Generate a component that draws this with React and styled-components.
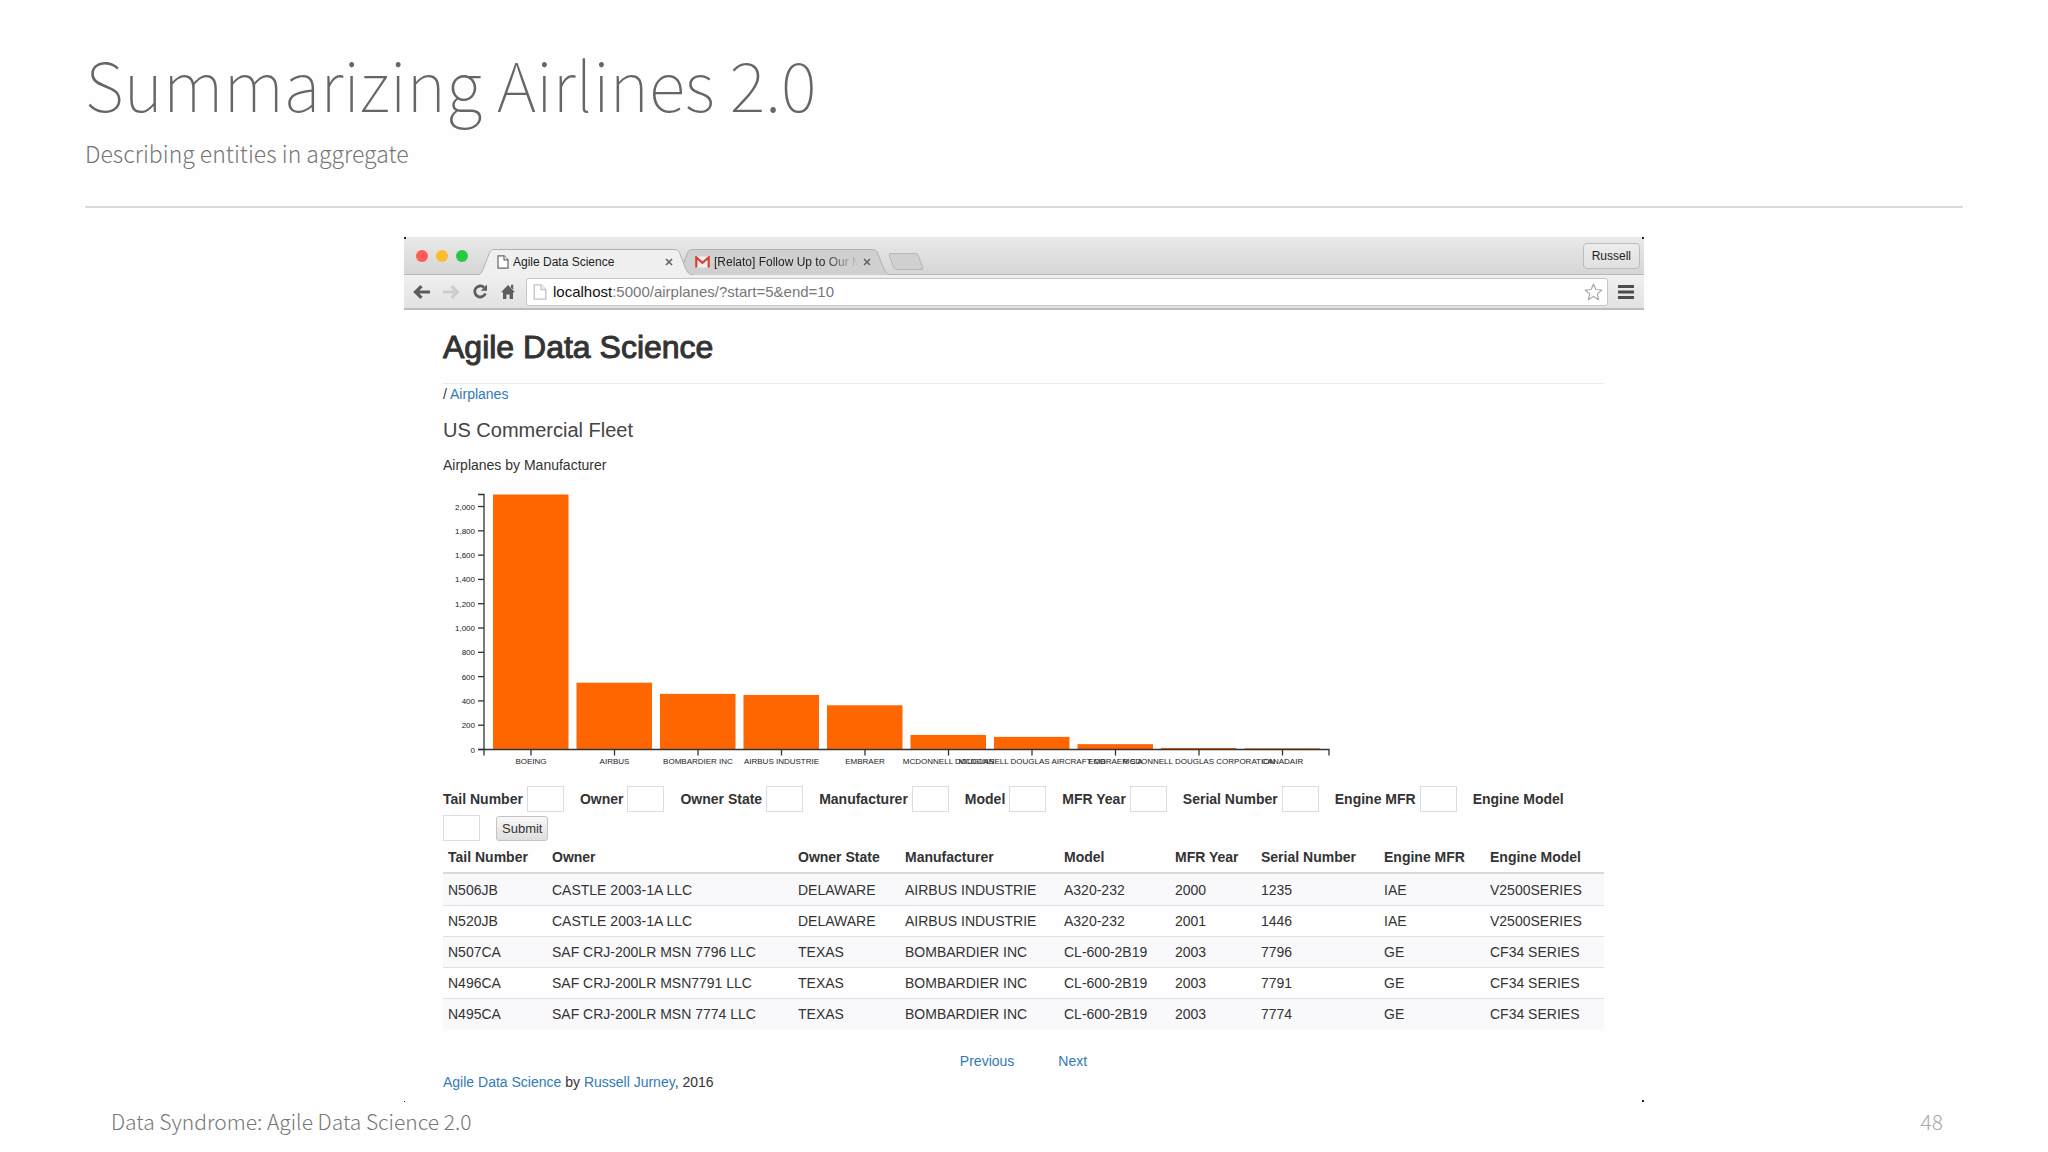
import React from 'react'
import styled, { createGlobalStyle, css } from 'styled-components'

const manufacturers = [
  { name: 'BOEING', count: 2099 },
  { name: 'AIRBUS', count: 550 },
  { name: 'BOMBARDIER INC', count: 458 },
  { name: 'AIRBUS INDUSTRIE', count: 449 },
  { name: 'EMBRAER', count: 364 },
  { name: 'MCDONNELL DOUGLAS', count: 120 },
  { name: 'MCDONNELL DOUGLAS AIRCRAFT CO', count: 104 },
  { name: 'EMBRAER S A', count: 44 },
  { name: 'MCDONNELL DOUGLAS CORPORATION', count: 13 },
  { name: 'CANADAIR', count: 10 }
]

const columns = [
  { label: 'Tail Number', width: 104 },
  { label: 'Owner', width: 246 },
  { label: 'Owner State', width: 107 },
  { label: 'Manufacturer', width: 159 },
  { label: 'Model', width: 111 },
  { label: 'MFR Year', width: 86 },
  { label: 'Serial Number', width: 123 },
  { label: 'Engine MFR', width: 106 },
  { label: 'Engine Model', width: 119 }
]

const airplanes = [
  ['N506JB', 'CASTLE 2003-1A LLC', 'DELAWARE', 'AIRBUS INDUSTRIE', 'A320-232', '2000', '1235', 'IAE', 'V2500SERIES'],
  ['N520JB', 'CASTLE 2003-1A LLC', 'DELAWARE', 'AIRBUS INDUSTRIE', 'A320-232', '2001', '1446', 'IAE', 'V2500SERIES'],
  ['N507CA', 'SAF CRJ-200LR MSN 7796 LLC', 'TEXAS', 'BOMBARDIER INC', 'CL-600-2B19', '2003', '7796', 'GE', 'CF34 SERIES'],
  ['N496CA', 'SAF CRJ-200LR MSN7791 LLC', 'TEXAS', 'BOMBARDIER INC', 'CL-600-2B19', '2003', '7791', 'GE', 'CF34 SERIES'],
  ['N495CA', 'SAF CRJ-200LR MSN 7774 LLC', 'TEXAS', 'BOMBARDIER INC', 'CL-600-2B19', '2003', '7774', 'GE', 'CF34 SERIES']
]

const PageIcon = ({ color, size }) => (
  <svg width={size - 2} height={size} viewBox="0 0 12 14" fill="#fff" stroke={color} strokeWidth="1.2">
    <path d="M1 .8h6l4 4v8.4H1z" />
    <path d="M7 .8v4h4" />
  </svg>
)

const GmailIcon = () => (
  <svg width="15" height="12" viewBox="0 0 15 12">
    <path d="M1 .5h13v11H1z" fill="#f4eeee" />
    <path d="M1.3 11.6V1.4l6.2 5.4 6.2-5.4v10.2" fill="none" stroke="#d9402f" strokeWidth="2.2" />
  </svg>
)

const CrossIcon = () => (
  <svg width="8" height="8" viewBox="0 0 8 8" stroke="#666" strokeWidth="1.7">
    <path d="M1 1l6 6M7 1L1 7" />
  </svg>
)

const ArrowIcon = ({ color, flip }) => (
  <svg width="17" height="14" viewBox="0 0 17 14" fill="none" stroke={color} strokeWidth="3.2">
    <path d={flip ? 'M0 7h14M8.5 1.2L14.5 7l-6 5.8' : 'M17 7H3M8.5 1.2L2.5 7l6 5.8'} />
  </svg>
)

const ReloadIcon = () => (
  <svg width="15" height="15" viewBox="0 0 15 15">
    <path d="M12.4 9.5A5.5 5.5 0 1 1 11 3.4" fill="none" stroke="#5d5d5d" strokeWidth="2.8" />
    <path d="M14 .6v6.2H7.8z" fill="#5d5d5d" />
  </svg>
)

const HomeIcon = () => (
  <svg width="14" height="15" viewBox="0 0 14 15" fill="#5d5d5d">
    <path d="M7 1l7 7.2h-2V15H8.6v-4.6H5.4V15H2V8.2H0z" />
    <path d="M10 .8h2.2v5L10 3.6z" />
  </svg>
)

const StarIcon = () => (
  <svg width="19" height="18" viewBox="0 0 19 18" fill="#fff" stroke="#a9a9ac" strokeWidth="1.2" strokeLinejoin="round">
    <path d="M9.5 1l2.3 5.5 6 .5-4.5 3.9 1.4 5.9-5.2-3.2-5.2 3.2 1.4-5.9L1.2 7l6-.5z" />
  </svg>
)

const MenuIcon = () => (
  <svg width="16" height="14" viewBox="0 0 16 14" fill="#4c4c4e">
    <path d="M0 0h16v3H0zM0 5.5h16v3H0zM0 11h16v3H0z" />
  </svg>
)

const AXIS_X = 41
const BASE = 259.5
const TOP = 4.5
const STEP = 83.5
const scale = value => (value * (BASE - TOP)) / 2099

const FleetChart = () => (
  <Chart width="900" height="275" role="img" aria-label="Airplanes by Manufacturer">
    {manufacturers.map(({ name, count }, i) => (
      <g key={name}>
        <rect x={50 + i * STEP} y={BASE - scale(count)} width="75.5" height={scale(count)} fill="#ff6600" />
        <path className="axis" d={`M${88 + i * STEP} ${BASE}v6`} />
        <text x={88 + i * STEP} y="274" textAnchor="middle">
          {name}
        </text>
      </g>
    ))}
    {Array.from({ length: 11 }, (_, i) => i * 200).map(value => (
      <g key={value}>
        <path className="axis" d={`M${AXIS_X - 6} ${BASE - scale(value)}h6`} />
        <text x={AXIS_X - 9} y={BASE - scale(value) + 3} textAnchor="end">
          {value.toLocaleString('en-US')}
        </text>
      </g>
    ))}
    <path className="axis" d={`M${AXIS_X - 6} ${TOP}h6V${BASE}h-6`} />
    <path className="axis" d={`M${AXIS_X} ${BASE + 6}v-6H886v6`} />
  </Chart>
)

const App = () => (
  <Slide>
    <GlobalStyle />
    <Header>
      <Title>Summarizing Airlines 2.0</Title>
      <Subtitle>Describing entities in aggregate</Subtitle>
    </Header>
    <Browser>
      <TabStrip>
        <Lights>
          <Light color="#fc5b57" />
          <Light color="#fdbc2e" />
          <Light color="#29c940" />
        </Lights>
        <Tab $active>
          <TabShape $active />
          <PageIcon color="#666" size={14} />
          <TabTitle>Agile Data Science</TabTitle>
          <IconButton aria-label="Close tab">
            <CrossIcon />
          </IconButton>
        </Tab>
        <Tab>
          <TabShape />
          <GmailIcon />
          <TabTitle $fade>[Relato] Follow Up to Our M</TabTitle>
          <IconButton aria-label="Close tab">
            <CrossIcon />
          </IconButton>
        </Tab>
        <NewTab aria-label="New tab" />
        <Profile>Russell</Profile>
      </TabStrip>
      <Toolbar>
        <NavButtons>
          <IconButton aria-label="Back">
            <ArrowIcon color="#5d5d5d" />
          </IconButton>
          <IconButton aria-label="Forward">
            <ArrowIcon color="#cdcdcf" flip />
          </IconButton>
          <IconButton aria-label="Reload">
            <ReloadIcon />
          </IconButton>
          <IconButton aria-label="Home">
            <HomeIcon />
          </IconButton>
        </NavButtons>
        <Omnibox>
          <PageIcon color="#c4c4c4" size={16} />
          <Url>
            <b>localhost</b>:5000/airplanes/?start=5&amp;end=10
          </Url>
          <IconButton aria-label="Bookmark this page">
            <StarIcon />
          </IconButton>
        </Omnibox>
        <IconButton aria-label="Menu">
          <MenuIcon />
        </IconButton>
      </Toolbar>
      <Page>
        <SiteName>Agile Data Science</SiteName>
        <Line>
          / <Link href="#airplanes">Airplanes</Link>
        </Line>
        <Heading>US Commercial Fleet</Heading>
        <Line>Airplanes by Manufacturer</Line>
        <FleetChart />
        <Filters onSubmit={e => e.preventDefault()}>
          {columns.map(({ label }) => (
            <React.Fragment key={label}>
              <Label htmlFor={label.replace(' ', '')}>{label}</Label>
              <Field id={label.replace(' ', '')} type="text" />
            </React.Fragment>
          ))}
          <Submit type="submit">Submit</Submit>
        </Filters>
        <Table>
          <colgroup>
            {columns.map(({ label, width }) => (
              <col key={label} width={width} />
            ))}
          </colgroup>
          <thead>
            <tr>
              {columns.map(({ label }) => (
                <th key={label}>{label}</th>
              ))}
            </tr>
          </thead>
          <tbody>
            {airplanes.map(row => (
              <tr key={row[0]}>
                {row.map((cell, i) => (
                  <td key={i}>{cell}</td>
                ))}
              </tr>
            ))}
          </tbody>
        </Table>
        <Pager>
          <Link href="#previous">Previous</Link>
          <Link href="#next">Next</Link>
        </Pager>
        <Line>
          <Link href="#book">Agile Data Science</Link> by <Link href="#author">Russell Jurney</Link>, 2016
        </Line>
      </Page>
    </Browser>
    <Footer>
      <span>Data Syndrome: Agile Data Science 2.0</span>
      <PageNumber>48</PageNumber>
    </Footer>
  </Slide>
)

const GlobalStyle = createGlobalStyle`
  * {
    box-sizing: border-box;
  }

  body {
    margin: 0;
    background: #fefefe;
  }
`

const Slide = styled.main`
  display: flex;
  flex-direction: column;
  min-height: 100vh;
  padding: 0 85px;
  font-family: 'Noto Sans CJK SC', 'Noto Sans', sans-serif;
  font-weight: 300;
  color: #666;
`

const Header = styled.header`
  padding: 35px 0 36px;
  border-bottom: 2px solid #dadada;
`

const Title = styled.h1`
  margin: 0 0 5px;
  font-size: 68px;
  line-height: 96px;
  font-weight: 100;
`

const Subtitle = styled.p`
  margin: 0;
  font-size: 23px;
  line-height: 34px;
  font-weight: 300;
  color: #777;
`

const Browser = styled.section`
  position: relative;
  width: 100%;
  max-width: 1240px;
  margin: 29px auto 0;
  font-family: 'Liberation Sans', Arial, sans-serif;
  font-weight: 400;
  font-size: 14px;
  line-height: 20px;
  color: #333;

  /* dark specks at the four corners of the window */
  &::after {
    content: '';
    position: absolute;
    inset: 0;
    pointer-events: none;
    background: linear-gradient(#222, #222) 0 0 / 2px 2px no-repeat,
      linear-gradient(#222, #222) 100% 0 / 2px 2px no-repeat,
      linear-gradient(#222, #222) 0 100% / 1px 1px no-repeat,
      linear-gradient(#222, #222) 100% 100% / 2px 2px no-repeat;
  }
`

const TabStrip = styled.div`
  display: flex;
  align-items: flex-end;
  height: 38px;
  padding: 0 4px 0 12px;
  background: linear-gradient(#e9e9e9, #d6d6d6);
  border-bottom: 1px solid #b9b9b9;
`

const Lights = styled.div`
  display: flex;
  gap: 8px;
  align-self: center;
  margin-right: 8px;
`

const Light = styled.span`
  width: 12px;
  height: 12px;
  border-radius: 50%;
  background: ${props => props.color};
`

const Tab = styled.div`
  position: relative;
  display: flex;
  align-items: center;
  gap: 4px;
  width: 218px;
  height: 26px;
  margin-bottom: -1px;
  margin-right: -20px;
  padding: 0 21px;
  font-size: 12px;
  color: #222;
  z-index: ${props => (props.$active ? 2 : 1)};
`

const TabOutline = styled.svg`
  position: absolute;
  inset: 0;
  width: 100%;
  height: 100%;
  z-index: -1;
`

const TabShape = ({ $active }) => (
  <TabOutline viewBox="0 0 218 26" preserveAspectRatio="none">
    <path
      d="M0 26C5 26 6 23 8 18L13 5C14.5 1.5 16 .5 19 .5H198C201 .5 203 1.5 204 5L209 18C211 23 213 26 218 26"
      fill={$active ? '#f0f0f0' : '#d0d0d0'}
      stroke="#b0b0b0"
    />
  </TabOutline>
)

const TabTitle = styled.span`
  flex: 1;
  overflow: hidden;
  white-space: nowrap;
  ${props =>
    props.$fade &&
    css`
      mask-image: linear-gradient(to right, #000 75%, transparent);
    `}
`

const buttonReset = css`
  margin: 0;
  padding: 0;
  border: 0;
  background: none;
  font: inherit;
  color: inherit;
`

const IconButton = styled.button`
  ${buttonReset}
  display: flex;
  flex-shrink: 0;
`

const NewTab = styled.button`
  ${buttonReset}
  width: 30px;
  height: 17px;
  margin: 0 auto 4px 19px;
  background: #d0d0d0;
  border: 1px solid #b6b6b6;
  border-radius: 3px;
  transform: skewX(20deg);
`

const Profile = styled.button`
  ${buttonReset}
  height: 26px;
  margin-bottom: 5px;
  padding: 0 8px;
  font-size: 12px;
  color: #222;
  background: linear-gradient(#ededed, #e0e0e0);
  border: 1px solid #bcbcbc;
  border-radius: 4px;
`

const Toolbar = styled.div`
  display: flex;
  align-items: center;
  gap: 10px;
  height: 35px;
  padding: 0 10px 0 9px;
  background: linear-gradient(#f0f0f0, #e2e1e3);
  border-bottom: 2px solid #bdbcbf;
`

const NavButtons = styled.div`
  display: flex;
  align-items: center;
  gap: 13px;
  margin-right: 1px;
`

const Omnibox = styled.div`
  flex: 1;
  display: flex;
  align-items: center;
  gap: 6px;
  height: 28px;
  padding: 0 4px 0 6px;
  background: #fff;
  border: 1px solid #c6c5c8;
  border-radius: 3px;
`

const Url = styled.span`
  flex: 1;
  font-size: 15px;
  color: #777;

  b {
    font-weight: 400;
    color: #111;
  }
`

const Page = styled.div`
  padding: 19px 40px 10px 39px;
`

const SiteName = styled.h2`
  margin: 0;
  padding-bottom: 18px;
  border-bottom: 1px solid #ebe9ec;
  font-size: 32px;
  line-height: 36px;
  font-weight: 400;
  -webkit-text-stroke: 1px #333;
`

const Heading = styled.h3`
  margin: 14px 0 13px;
  font-size: 20px;
  line-height: 24px;
  font-weight: 400;
  color: #444;
`

const Line = styled.div`
  white-space: pre-wrap;
`

const Link = styled.a`
  color: #337ab7;
  text-decoration: none;
`

const Chart = styled.svg`
  display: block;
  margin: 15px 0 21px;
  overflow: visible;

  text {
    font-size: 8px;
    fill: #222;
  }

  .axis {
    fill: none;
    stroke: #333;
    stroke-width: 1.3;
  }
`

const Filters = styled.form`
  display: flex;
  flex-wrap: wrap;
  align-items: center;
  gap: 3px 4px;
  margin-bottom: 1px;
`

const Label = styled.label`
  font-weight: 700;
`

const Field = styled.input`
  width: 37px;
  height: 26px;
  margin-right: 12px;
  padding: 2px;
  background: #fff;
  border: 1px solid #dddce2;
  font: inherit;
`

const Submit = styled.button`
  height: 25px;
  padding: 0 5px;
  font-family: inherit;
  font-size: 13px;
  color: #333;
  background: linear-gradient(#f8f8f8, #dedede);
  border: 1px solid #c4c4c4;
  border-radius: 3px;
`

const Table = styled.table`
  width: 100%;
  table-layout: fixed;
  border-spacing: 0;

  th,
  td {
    padding: 5px;
    text-align: left;
    white-space: nowrap;
  }

  th {
    border-bottom: 2px solid #d9d9dc;
  }

  td {
    height: 31px;
    border-top: 1px solid #e0e0e4;
  }

  tbody tr:first-child td {
    border-top: 0;
  }

  tbody tr:nth-child(odd) {
    background: #f9f9fb;
  }
`

const Pager = styled.nav`
  display: flex;
  justify-content: center;
  gap: 44px;
  margin: 22px 0 1px;
`

const Footer = styled.footer`
  display: flex;
  justify-content: space-between;
  margin-top: 3px;
  padding: 0 20px 0 26px;
  font-size: 21px;
  line-height: 32px;
  font-weight: 300;
  color: #777;
`

const PageNumber = styled.span`
  color: #aaa;
`

export default App
